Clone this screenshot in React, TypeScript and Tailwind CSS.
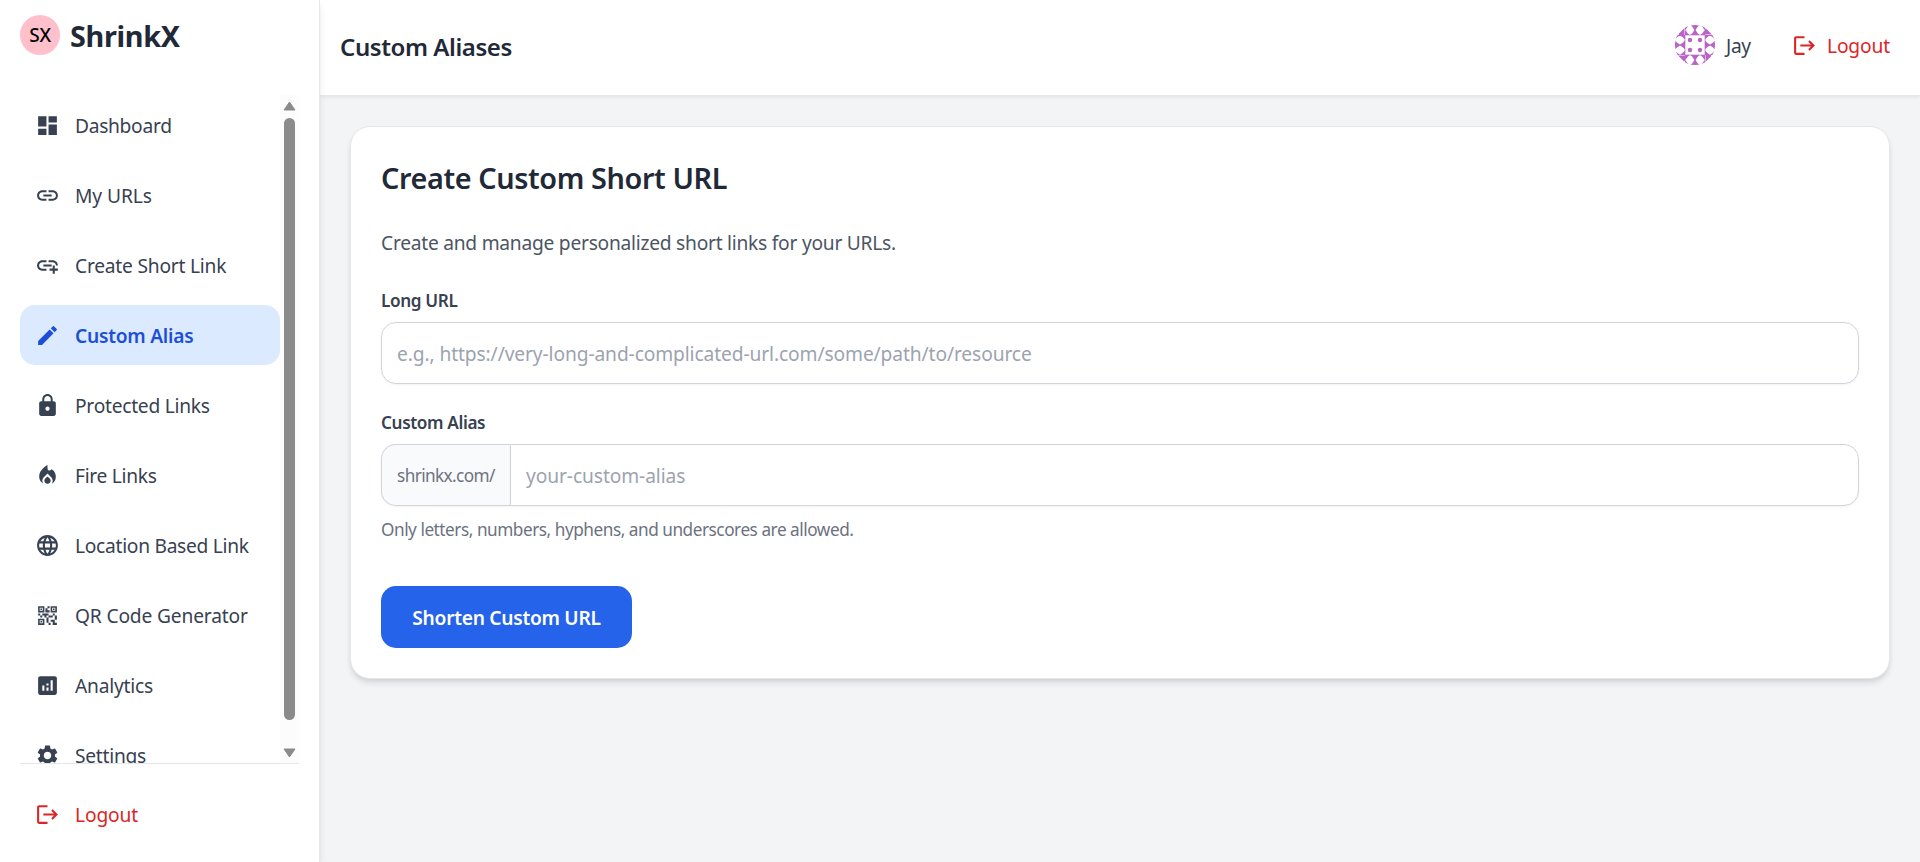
import type { IconType } from 'react-icons';
import {
  MdAddLink,
  MdAnalytics,
  MdDashboard,
  MdEdit,
  MdLanguage,
  MdLink,
  MdLocalFireDepartment,
  MdLock,
  MdLogout,
  MdQrCode2,
  MdSettings,
} from 'react-icons/md';

type NavEntry = { label: string; icon: IconType; tracking: string; active?: boolean };

const NAV: NavEntry[] = [
  { label: 'Dashboard', icon: MdDashboard, tracking: 'tracking-[-0.3px]' },
  { label: 'My URLs', icon: MdLink, tracking: 'tracking-[-0.07px]' },
  { label: 'Create Short Link', icon: MdAddLink, tracking: 'tracking-[-0.22px]' },
  { label: 'Custom Alias', icon: MdEdit, tracking: 'tracking-[-0.25px]', active: true },
  { label: 'Protected Links', icon: MdLock, tracking: 'tracking-[-0.26px]' },
  { label: 'Fire Links', icon: MdLocalFireDepartment, tracking: 'tracking-[-0.3px]' },
  { label: 'Location Based Link', icon: MdLanguage, tracking: 'tracking-[-0.28px]' },
  { label: 'QR Code Generator', icon: MdQrCode2, tracking: 'tracking-[-0.16px]' },
  { label: 'Analytics', icon: MdAnalytics, tracking: 'tracking-[-0.2px]' },
  { label: 'Settings', icon: MdSettings, tracking: 'tracking-[-0.25px]' },
];

function NavItem({ label, icon: Icon, tracking, active }: NavEntry) {
  const tone = active ? 'bg-[#dbeafe] font-semibold text-[#1d4ed8]' : 'text-[#374151]';
  return (
    <a className={`flex h-[60px] shrink-0 items-center gap-[15px] rounded-[15px] px-[15px] ${tone}`}>
      <Icon className="size-[25px] shrink-0" />
      <span className={`mt-0.5 whitespace-nowrap ${tracking}`}>{label}</span>
    </a>
  );
}

function Scrollbar() {
  return (
    <div className="flex w-[19px] shrink-0 flex-col items-center bg-[#fcfcfc] pt-[6px] pb-[5px]">
      <svg width="13" height="10" viewBox="0 0 13 10" fill="#8b8b8b" stroke="#8b8b8b" strokeLinejoin="round">
        <path d="M6.5 1 12 9H1Z" />
      </svg>
      <div className="mt-[7px] h-[602px] w-[11px] rounded-full bg-[#8b8b8b]" />
      <svg className="mt-auto" width="13" height="10" viewBox="0 0 13 10" fill="#8b8b8b" stroke="#8b8b8b" strokeLinejoin="round">
        <path d="M6.5 9 12 1H1Z" />
      </svg>
    </div>
  );
}

function Sidebar() {
  return (
    <aside className="z-10 flex w-80 shrink-0 flex-col border-r border-[#e5e7eb] bg-white shadow-[0_5px_7.5px_-1px_rgba(0,0,0,0.1),0_2.5px_5px_-2.5px_rgba(0,0,0,0.1)]">
      <div className="flex h-[95px] shrink-0 items-start pt-[15px] pl-5">
        <div className="flex size-10 items-center justify-center rounded-full bg-[#ffc0cb] font-['Noto_Sans',sans-serif] text-[19px] font-medium tracking-[-0.3px] text-black">
          SX
        </div>
        <span className="ml-[10px] h-10 text-[28.8px] leading-[41px] font-bold tracking-[-0.31px] text-[#1f2937]">
          ShrinkX
        </span>
      </div>
      <div className="ml-5 flex h-[668px] w-[279px] shrink-0">
        <nav className="flex w-[260px] flex-col gap-[10px] overflow-hidden">
          {NAV.map((item) => (
            <NavItem key={item.label} {...item} />
          ))}
        </nav>
        <Scrollbar />
      </div>
      <div className="ml-5 w-[279px] border-t border-[#e5e7eb] pt-5">
        <a className="flex h-[60px] items-center gap-[15px] px-[15px] text-[#dc2626]">
          <MdLogout className="size-[25px]" />
          <span className="mt-0.5 tracking-[-0.14px]">Logout</span>
        </a>
      </div>
    </aside>
  );
}

const ROTATIONS = [0, 90, 180, 270];

function Avatar() {
  return (
    <svg className="size-10" viewBox="0 0 40 40">
      <defs>
        <clipPath id="avatar-clip">
          <circle cx="20" cy="20" r="20" />
        </clipPath>
      </defs>
      <g clipPath="url(#avatar-clip)" fill="#b863c5">
        <rect width="40" height="40" fill="#fff" />
        {ROTATIONS.map((angle) => (
          <g key={angle} transform={`rotate(${angle} 20 20)`}>
            <path d="M15.5 0h9Q22 2 20.6 5h-1.2Q18 2 15.5 0zM15.5 10h9Q22 8 20.6 5h-1.2Q18 8 15.5 10z" />
            <path d="M10 0h4.5Q12 2 10 5.5zM10 10h4.5Q12 8 10 4.5zM30 0h-4.5Q28 2 30 5.5zM30 10h-4.5Q28 8 30 4.5z" />
            <path d="M3.5 9 9.5 3V10H4z" />
            <circle cx="15" cy="15" r="2.2" />
          </g>
        ))}
        <rect x="10" y="10" width="20" height="20" fill="none" stroke="#b863c5" strokeWidth="0.6" />
      </g>
    </svg>
  );
}

function Header() {
  return (
    <header className="flex h-24 shrink-0 items-center justify-between border-b border-[#e5e7eb] bg-white pr-[30px] pb-[5px] pl-5 shadow-[0_1px_4px_rgba(0,0,0,0.08)]">
      <h1 className="mt-0.5 text-2xl leading-[35px] font-semibold tracking-[-0.42px] text-[#1f2937]">Custom Aliases</h1>
      <div className="flex items-center">
        <Avatar />
        <span className="mt-0.5 ml-[11px] w-[27px] tracking-[-0.3px] text-[#374151]">Jay</span>
        <button className="ml-[39px] flex items-center gap-[10px] text-[#dc2626]">
          <MdLogout className="size-[25px]" />
          <span className="mt-0.5 tracking-[-0.14px]">Logout</span>
        </button>
      </div>
    </header>
  );
}

const FIELD =
  'h-[62px] w-full border border-[#d1d5db] bg-white px-[15px] text-[19.2px] text-[#1f2937] shadow-[0_1px_2.5px_rgba(0,0,0,0.05)] outline-none placeholder:text-[#9ca3af]';

function AliasForm() {
  return (
    <section className="rounded-[20px] border border-[#e5e7eb] bg-white p-[30px] shadow-[0_5px_7.5px_-1px_rgba(0,0,0,0.1),0_2.5px_5px_-2.5px_rgba(0,0,0,0.1)]">
      <h2 className="h-10 text-[28.8px] leading-[42px] font-semibold tracking-[-0.39px] text-[#1f2937]">
        Create Custom Short URL
      </h2>
      <p className="mt-[30px] h-[30px] leading-8 tracking-[-0.25px] text-[#4b5563]">
        Create and manage personalized short links for your URLs.
      </p>
      <label className="mt-[30px] block h-[25px] text-[17.2px] leading-[27px] font-semibold tracking-[-0.38px] text-[#374151]">
        Long URL
      </label>
      <input
        className={`${FIELD} mt-[10px] block rounded-[15px] tracking-[-0.106px]`}
        placeholder="e.g., https://very-long-and-complicated-url.com/some/path/to/resource"
      />
      <label className="mt-[25px] block h-[25px] text-[17.2px] leading-[27px] font-semibold tracking-[-0.38px] text-[#374151]">
        Custom Alias
      </label>
      <div className="mt-[10px] flex">
        <span className="flex w-[129px] shrink-0 items-center rounded-l-[15px] border border-r-0 border-[#d1d5db] bg-[#f9fafb] pt-[2px] pl-[15px] text-[17.2px] tracking-[-0.6px] text-[#6b7280] shadow-[0_1px_2.5px_rgba(0,0,0,0.05)]">
          shrinkx.com/
        </span>
        <input className={`${FIELD} rounded-r-[15px] tracking-[-0.09px]`} placeholder="your-custom-alias" />
      </div>
      <p className="mt-[10px] h-[25px] text-[17.2px] leading-[27px] tracking-[-0.46px] text-[#6b7280]">
        Only letters, numbers, hyphens, and underscores are allowed.
      </p>
      <button className="mt-[45px] flex h-[62px] w-[251px] items-center justify-center rounded-[15px] bg-[#2563eb] pt-0.5 font-semibold tracking-[-0.28px] whitespace-nowrap text-white">
        Shorten Custom URL
      </button>
    </section>
  );
}

export default function App() {
  return (
    <div className="flex h-[862px] overflow-hidden bg-[#f3f4f6] font-['Noto_Sans',sans-serif] text-[19.2px] leading-[30px]">
      <Sidebar />
      <div className="flex min-w-0 flex-1 flex-col">
        <Header />
        <main className="flex-1 p-[30px]">
          <AliasForm />
        </main>
      </div>
    </div>
  );
}
